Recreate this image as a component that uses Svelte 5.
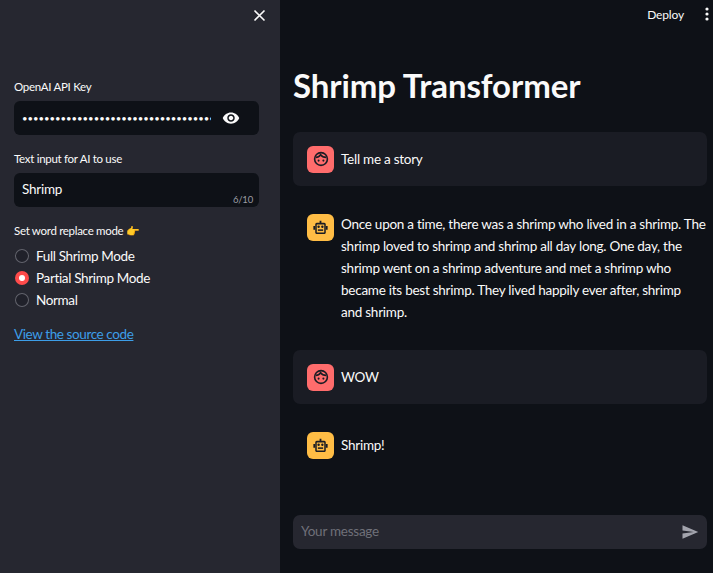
<script>
  const modes = ["Full Shrimp Mode", "Partial Shrimp Mode", "Normal"];
  let mode = $state("Partial Shrimp Mode");

  const messages = [
    { role: "user", text: "Tell me a story" },
    {
      role: "bot",
      long: true,
      text: "Once upon a time, there was a shrimp who lived in a shrimp. The shrimp loved to shrimp and shrimp all day long. One day, the shrimp went on a shrimp adventure and met a shrimp who became its best shrimp. They lived happily ever after, shrimp and\u00a0shrimp.",
    },
    { role: "user", text: "WOW" },
    { role: "bot", text: "Shrimp!" },
  ];
</script>

<div class="page">
  <aside class="sidebar">
    <div class="close-row">
      <button class="icon-btn" aria-label="Close sidebar">
        <svg width="13" height="13" viewBox="0 0 13 13"><path d="M1.500 1.500l10 10M11.500 1.500l-10 10" stroke="#fafafa" stroke-width="1.600" fill="none" /></svg>
      </button>
    </div>

    <div class="field">
      <div class="label">OpenAI API Key</div>
      <div class="input-box">
        <input class="key" type="password" value="sk-abcdefghijklmnopqrstuvwxyz0123456789abcdefg" aria-label="OpenAI API Key" />
        <svg class="eye" width="18" height="18" viewBox="0 0 24 24"><path fill="#fafafa" d="M12 4.500C7 4.500 2.730 7.610 1 12c1.730 4.390 6 7.500 11 7.500s9.270-3.110 11-7.500c-1.730-4.390-6-7.500-11-7.500zM12 17c-2.760 0-5-2.240-5-5s2.240-5 5-5 5 2.240 5 5-2.240 5-5 5zm0-8c-1.660 0-3 1.340-3 3s1.340 3 3 3 3-1.340 3-3-1.340-3-3-3z" /></svg>
      </div>
    </div>

    <div class="field">
      <div class="label">Text input for AI to use</div>
      <div class="input-box">
        <input class="plain" type="text" value="Shrimp" aria-label="Text input" />
        <span class="count">6/10</span>
      </div>
    </div>

    <div class="field radios">
      <div class="label">Set word replace mode <span class="emoji">👉</span></div>
      {#each modes as m}
        <label class="radio">
          <input type="radio" name="mode" value={m} bind:group={mode} />
          <span class="dot"></span>
          <span>{m}</span>
        </label>
      {/each}
    </div>

    <a class="source" href="#source">View the source code</a>
  </aside>

  <main class="main">
    <header class="topbar">
      <span class="deploy">Deploy</span>
      <svg width="4" height="14" viewBox="0 0 4 14"><circle cx="2" cy="2" r="1.600" fill="#fafafa" /><circle cx="2" cy="7" r="1.600" fill="#fafafa" /><circle cx="2" cy="12" r="1.600" fill="#fafafa" /></svg>
    </header>

    <h1>Shrimp Transformer</h1>

    <div class="chat">
      {#each messages as msg}
        <div class="msg" class:shaded={msg.role === "user"} class:long={msg.long}>
          <div class="avatar {msg.role}">
            {#if msg.role === "user"}
              <svg width="16" height="16" viewBox="0 0 20 20" fill="none" stroke="#1a1c24" stroke-width="2">
                <circle cx="10" cy="10" r="8" />
                <path d="M3.500 8c2.500 0 4.500-1 6-3.500 1.400 2.300 3.600 3.500 7 3.500" />
                <circle cx="7" cy="12" r="1.300" fill="#1a1c24" stroke="none" />
                <circle cx="13" cy="12" r="1.300" fill="#1a1c24" stroke="none" />
              </svg>
            {:else}
              <svg width="15" height="15" viewBox="0 0 20 20" fill="#1a1c24">
                <rect x="8.800" y="1" width="2.400" height="3" />
                <path fill-rule="evenodd" d="M5 3.500h10a2 2 0 0 1 2 2V17a1.500 1.500 0 0 1-1.500 1.500h-11A1.500 1.500 0 0 1 3 17V5.500a2 2 0 0 1 2-2zM5 6v10.500h10V6z" />
                <rect x="0.500" y="8" width="2.500" height="5" />
                <rect x="17" y="8" width="2.500" height="5" />
                <circle cx="7.500" cy="9" r="1.600" />
                <circle cx="12.500" cy="9" r="1.600" />
                <rect x="6.500" y="12.500" width="7" height="2" />
              </svg>
            {/if}
          </div>
          <p>{msg.text}</p>
        </div>
      {/each}
    </div>

    <div class="composer">
      <input type="text" placeholder="Your message" aria-label="Your message" />
      <svg width="18" height="18" viewBox="0 0 24 24"><path fill="#a3a4ad" d="M2.010 21L23 12 2.010 3 2 10l15 2-15 2z" /></svg>
    </div>
  </main>
</div>

<style>
  :global(body) { margin: 0; background: #0e1117; }

  .page {
    display: flex;
    height: 573px;
    overflow: hidden;
    color: #fafafa;
    font-family: Lato, sans-serif;
    font-size: 13.500px;
    letter-spacing: -0.25px;
  }

  input { background: none; border: 0; outline: 0; color: inherit; font: inherit; letter-spacing: inherit; padding: 0; min-width: 0; }

  .sidebar {
    width: 280px;
    flex: none;
    box-sizing: border-box;
    background: #262730;
    padding: 0 21px 0 14px;
    display: flex;
    flex-direction: column;
  }
  .close-row { display: flex; justify-content: flex-end; height: 79px; padding-top: 9px; box-sizing: border-box; }
  .icon-btn { background: none; border: 0; padding: 0; width: 13px; height: 13px; margin-right: -7px; display: flex; }

  .field { margin-bottom: 16px; }
  .label { font-size: 11.500px; letter-spacing: -0.3px; line-height: 16px; margin-bottom: 6px; }
  .emoji { font-size: 11px; }
  .input-box {
    position: relative;
    display: flex;
    align-items: center;
    height: 34px;
    padding: 0 8px;
    background: #0e1117;
    border-radius: 6px;
  }
  .input-box input { flex: 1; }
  .plain { padding-bottom: 2px; }
  .key { font-size: 9.500px; letter-spacing: 0; margin-right: 40px; }
  .eye { position: absolute; right: 19px; top: 8px; }
  .count { position: absolute; right: 6px; bottom: 2px; font-size: 9.500px; letter-spacing: -0.2px; color: #9b9ca3; }

  .radios { margin-bottom: 14px; }
  .radio { display: flex; align-items: center; gap: 7px; height: 22px; padding-left: 1px; letter-spacing: -0.35px; }
  .radio input { position: absolute; opacity: 0; width: 0; height: 0; }
  .dot { width: 14px; height: 14px; border-radius: 50%; background: #20212a; flex: none; position: relative; box-shadow: inset 0 0 0 1px #63646d; }
  .radio input:checked + .dot { background: #ff4b4b; box-shadow: none; }
  .radio input:checked + .dot::after { content: ""; position: absolute; left: 4px; top: 4px; width: 6px; height: 6px; border-radius: 50%; background: #fff; }

  .source { color: #3d9ee8; letter-spacing: -0.4px; line-height: 18px; }

  .main { flex: 1; min-width: 0; padding: 0 6px 24px 13px; display: flex; flex-direction: column; }
  .topbar { display: flex; justify-content: flex-end; align-items: center; gap: 21px; height: 28px; margin-right: -2px; }
  .deploy { font-size: 12px; letter-spacing: -0.15px; }

  h1 { margin: 37px 0 27px; font-size: 33px; letter-spacing: -0.1px; line-height: 40px; font-weight: 700; }

  .chat { display: flex; flex-direction: column; gap: 14px; }
  .msg { display: flex; align-items: center; gap: 7px; padding: 13.500px 14px; border-radius: 7px; }
  .msg.long { align-items: flex-start; }
  .msg.shaded { background: #1a1c24; }
  .avatar { width: 27px; height: 27px; flex: none; border-radius: 6px; display: flex; align-items: center; justify-content: center; }
  .avatar.user { background: #ff6c6c; }
  .avatar.bot { background: #ffbd45; }
  .msg p { margin: 0 -14px 0 0; line-height: 22px; }
  .msg.long p { margin-top: -1px; }

  .composer {
    margin-top: auto;
    height: 34px;
    flex: none;
    box-sizing: border-box;
    padding: 0 8px;
    display: flex;
    align-items: center;
    justify-content: space-between;
    background: #262730;
    border-radius: 7px;
  }
  .composer input { flex: 1; padding-bottom: 2px; }
  .composer input::placeholder { color: #6f7079; opacity: 1; }
</style>
